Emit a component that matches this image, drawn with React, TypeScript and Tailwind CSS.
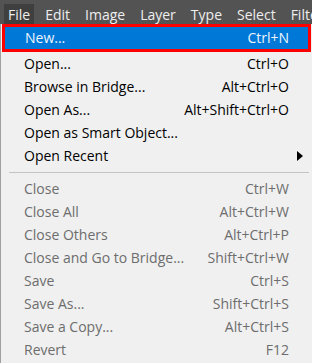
import React from 'react';

type Item = { label: string; shortcut?: string; disabled?: boolean; submenu?: boolean; active?: boolean };

const topItems = ["File", "Edit", "Image", "Layer", "Type", "Select", "Filter", "3D"];

const groups: Item[][] = [
  [
    { label: "New...", shortcut: "Ctrl+N", active: true },
    { label: "Open...", shortcut: "Ctrl+O" },
    { label: "Browse in Bridge...", shortcut: "Alt+Ctrl+O" },
    { label: "Open As...", shortcut: "Alt+Shift+Ctrl+O" },
    { label: "Open as Smart Object..." },
    { label: "Open Recent", submenu: true },
  ],
  [
    { label: "Close", shortcut: "Ctrl+W", disabled: true },
    { label: "Close All", shortcut: "Alt+Ctrl+W", disabled: true },
    { label: "Close Others", shortcut: "Alt+Ctrl+P", disabled: true },
    { label: "Close and Go to Bridge...", shortcut: "Shift+Ctrl+W", disabled: true },
    { label: "Save", shortcut: "Ctrl+S", disabled: true },
    { label: "Save As...", shortcut: "Shift+Ctrl+S", disabled: true },
    { label: "Save a Copy...", shortcut: "Alt+Ctrl+S", disabled: true },
    { label: "Revert", shortcut: "F12", disabled: true },
  ],
];

const Row: React.FC<{ item: Item }> = ({ item }) => {
  if (item.active) {
    return (
      <div className="mx-[1px] h-[28px] border-[3px] border-[#ff0000] bg-[#0078d7] text-[#eef5fc] flex items-center">
        <span className="flex-1 pl-[20px]">{item.label}</span>
        <span>{item.shortcut}</span>
        <span className="w-[19px]" />
      </div>
    );
  }
  return (
    <div className={`h-[23px] flex items-center ${item.disabled ? 'text-[#6d6d6d]' : 'text-black'}`}>
      <span className="flex-1 pl-[23px]">{item.label}</span>
      {item.shortcut && <span>{item.shortcut}</span>}
      <span className="w-[23px] flex items-center justify-start pl-[8px]">
        {item.submenu && (
          <svg width="6" height="10" viewBox="0 0 6 10">
            <path d="M0 0 L6 5 L0 10 Z" fill="#000" />
          </svg>
        )}
      </span>
    </div>
  );
};

const App: React.FC = () => {
  return (
    <div className="w-[312px] h-[363px] overflow-hidden bg-[#f0f0f0] text-[14px] leading-none" style={{ fontFamily: '"Open Sans", "Noto Sans", sans-serif' }}>
      <div className="h-[24px] bg-[#535353] flex items-end overflow-hidden whitespace-nowrap text-[#eeeeee] pl-[4px]">
        {topItems.map((t, i) => (
          <div key={t} className={`h-[20px] pt-[1px] flex items-center px-[4px] mr-[7px] shrink-0 ${i === 0 ? 'bg-[#3f3f3f]' : ''}`}>
            {t}
          </div>
        ))}
      </div>
      <div className="border-l border-[#a0a0a0] h-[339px] flex flex-col">
        {groups.map((g, gi) => (
          <div key={gi}>
            {gi > 0 && <div className="h-[10px] flex items-center pl-[8px] pr-[3px]"><div className="h-px w-full bg-[#c4c4c4]" /></div>}
            {g.map((it) => <Row key={it.label} item={it} />)}
          </div>
        ))}
      </div>
    </div>
  );
};

export default App;
